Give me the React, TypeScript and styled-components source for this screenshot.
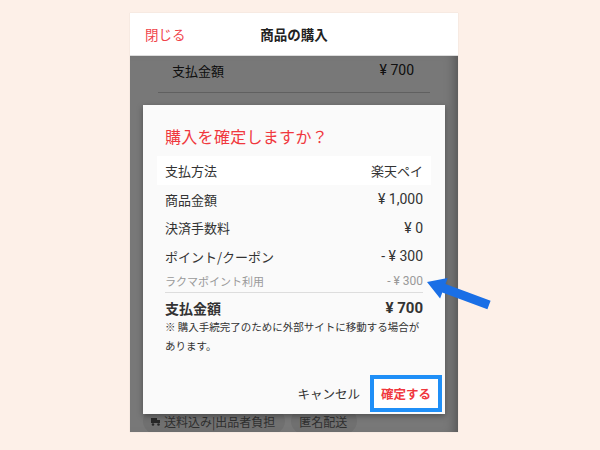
import React from "react";
import styled, { createGlobalStyle } from "styled-components";

const Global = createGlobalStyle`
  html, body { margin: 0; padding: 0; }
  body {
    background: #fdf0e8;
    font-family: "Noto Sans CJK JP", "Noto Sans", sans-serif;
    color: #333;
  }
`;

const Page = styled.div`
  position: relative;
  width: 600px;
  height: 450px;
  padding: 13px 0 0 130px;
  box-sizing: border-box;
  overflow: hidden;
`;

const Frame = styled.div`
  position: relative;
  width: 328px;
  height: 419px;
  background: #fff;
  overflow: hidden;
  display: flex;
  flex-direction: column;
  box-shadow: 0 0 1px rgba(0, 0, 0, 0.15);
`;

const Header = styled.header`
  height: 42px;
  flex: none;
  display: grid;
  grid-template-columns: 1fr auto 1fr;
  align-items: center;
  padding: 0 15px;
  background: #fff;
  border-bottom: 1px solid #ddd;
`;

const Close = styled.span`
  color: #f0444a;
  font-size: 13.5px;
`;

const HeaderTitle = styled.h1`
  margin: 0;
  font-size: 13.5px;
  font-weight: 700;
  color: #222;
`;

const Content = styled.div`
  position: relative;
  flex: 1;
  display: flex;
  flex-direction: column;
  background: #fff;
`;

const BgRow = styled.div`
  display: flex;
  justify-content: space-between;
  align-items: center;
  height: 28px;
  padding: 0 44px 0 42px;
  font-size: 13px;
  color: #222;
`;

const BgDivider = styled.div`
  height: 1px;
  margin: 8px 28px 0;
  background: #ccc;
`;

const Tags = styled.div`
  margin-top: auto;
  display: flex;
  gap: 6px;
  padding: 0 0 0 13px;
  height: 28px;
  transform: translateY(4px);
`;

const Tag = styled.span`
  display: inline-flex;
  align-items: center;
  gap: 3px;
  height: 26px;
  padding: 0 10px 0 8px;
  border-radius: 13px;
  background: #eee;
  color: #666;
  font-size: 12px;
`;

const Overlay = styled.div`
  position: absolute;
  inset: 0;
  background: rgba(0, 0, 0, 0.53);
  box-shadow: inset -10px 0 12px -8px rgba(0, 0, 0, 0.35);
`;

const Dialog = styled.div`
  position: absolute;
  left: 13px;
  top: 92px;
  width: 302px;
  height: 309px;
  background: #fafafa;
  box-sizing: border-box;
  padding: 19px 14px 0;
  display: flex;
  flex-direction: column;
  box-shadow: 0 2px 6px rgba(0, 0, 0, 0.35);
`;

const DialogTitle = styled.h2`
  margin: 0 0 8px 8px;
  font-size: 16px;
  font-weight: 400;
  letter-spacing: 0.3px;
  color: #f0383e;
  line-height: 24px;
`;

const Row = styled.div<{ $hl?: boolean; $sub?: boolean; $bold?: boolean }>`
  display: flex;
  justify-content: space-between;
  align-items: center;
  padding: 0 8px;
  height: ${(p) => (p.$sub ? "20px" : p.$bold ? "22px" : "28.7px")};
  background: ${(p) => (p.$hl ? "#fff" : "transparent")};
  font-size: ${(p) => (p.$sub ? "11px" : p.$bold ? "14px" : "13px")};
  font-weight: ${(p) => (p.$bold ? 700 : 400)};
  color: ${(p) => (p.$sub ? "#999" : "#333")};
`;

const Amount = styled.span<{ $size?: number }>`
  font-family: "Roboto", "Liberation Sans", sans-serif;
  font-size: ${(p) => p.$size ?? 14}px;
  white-space: pre;
`;

const Divider = styled.div`
  height: 1px;
  margin: 1px 8px 4px;
  background: #ddd;
`;

const Note = styled.p`
  margin: -2px 0 0;
  padding: 0 10px 0 8px;
  font-size: 10.5px;
  line-height: 19px;
  color: #333;
`;

const Actions = styled.div`
  margin-top: auto;
  display: flex;
  justify-content: flex-end;
  align-items: center;
  gap: 10px;
  padding: 0 0 2px;
  margin-right: -11px;
`;

const Cancel = styled.button`
  border: none;
  background: none;
  padding: 0;
  font-family: inherit;
  font-size: 12.5px;
  color: #333;
`;

const Confirm = styled.button`
  width: 72px;
  height: 37px;
  box-sizing: border-box;
  border: 4px solid #1f8ff7;
  background: #fff;
  padding: 0;
  font-family: inherit;
  font-size: 12.5px;
  font-weight: 700;
  color: #f0383e;
`;

const ArrowSvg = styled.svg`
  position: absolute;
  left: 0;
  top: 0;
  pointer-events: none;
`;

export default function App() {
  return (
    <>
      <Global />
      <Page>
        <Frame>
          <Header>
            <Close>閉じる</Close>
            <HeaderTitle>商品の購入</HeaderTitle>
            <span />
          </Header>
          <Content>
            <BgRow>
              <span>支払金額</span>
              <Amount>¥ 700</Amount>
            </BgRow>
            <BgDivider />
            <Tags>
              <Tag>
                <svg width="10" height="10" viewBox="0 0 10 10">
                  <rect x="0" y="2" width="6" height="5" fill="#555" />
                  <rect x="6" y="4" width="3" height="3" fill="#555" />
                  <circle cx="2" cy="8.5" r="1.3" fill="#555" />
                  <circle cx="7.5" cy="8.5" r="1.3" fill="#555" />
                </svg>
                送料込み|出品者負担
              </Tag>
              <Tag>匿名配送</Tag>
            </Tags>
            <Overlay />
          </Content>
          <Dialog>
            <DialogTitle>購入を確定しますか？</DialogTitle>
            <Row $hl>
              <span>支払方法</span>
              <span>楽天ペイ</span>
            </Row>
            <Row>
              <span>商品金額</span>
              <Amount>¥ 1,000</Amount>
            </Row>
            <Row>
              <span>決済手数料</span>
              <Amount>¥ 0</Amount>
            </Row>
            <Row>
              <span>ポイント/クーポン</span>
              <Amount>- ¥ 300</Amount>
            </Row>
            <Row $sub>
              <span>ラクマポイント利用</span>
              <Amount $size={12}>- ¥ 300</Amount>
            </Row>
            <Divider />
            <Row $bold>
              <span>支払金額</span>
              <Amount $size={15}>¥ 700</Amount>
            </Row>
            <Note>※ 購入手続完了のために外部サイトに移動する場合があります。</Note>
            <Actions>
              <Cancel>キャンセル</Cancel>
              <Confirm>確定する</Confirm>
            </Actions>
          </Dialog>
        </Frame>
        <ArrowSvg width="600" height="450" viewBox="0 0 600 450">
          <polygon
            points="490.6,300.8 445.5,284.1 447.7,278 427,282 440.1,298.6 442.3,292.5 487.4,309.2"
            fill="#1a6fe6"
          />
        </ArrowSvg>
      </Page>
    </>
  );
}
